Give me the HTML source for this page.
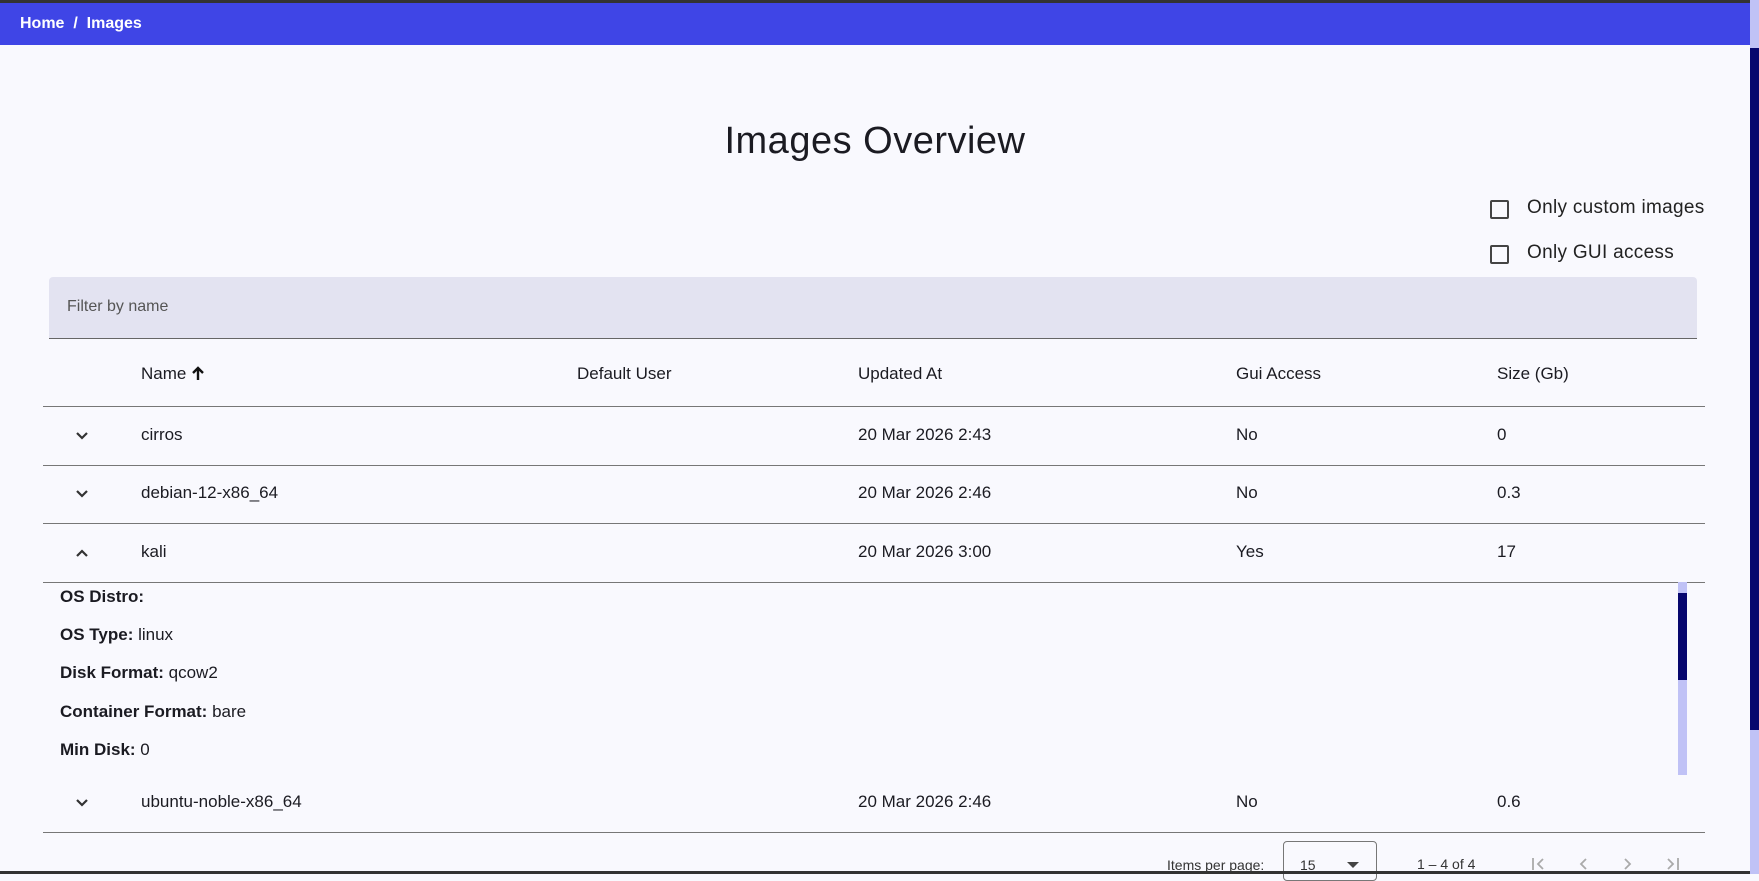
<!DOCTYPE html>
<html><head><meta charset="utf-8"><style>
*{box-sizing:border-box;margin:0;padding:0}
body{width:1759px;height:874px;overflow:hidden;background:#f9f9fe;font-family:"Liberation Sans",sans-serif;color:#1b1b22;position:relative}
.a{position:absolute;white-space:nowrap}
.hd{position:absolute;left:0;top:3px;width:1750px;height:42px;background:#3f45e6;color:#fff;font-weight:bold;font-size:16px;line-height:42px;padding-left:20px}
.line{position:absolute;left:43px;width:1662px;height:1px;background:#777}
.t{font-size:17px}
.cb{position:absolute;width:19px;height:19px;border:2px solid #444;border-radius:2px}
.chev{position:absolute;left:75px;width:14px;height:10px}
b{font-weight:bold}
</style></head><body>
<div class="a" style="left:0;top:0;width:1759px;height:3px;background:#333"></div>
<div class="hd">Home &nbsp;/ &nbsp;Images</div>
<div class="a" style="left:1750px;top:0;width:9px;height:48px;background:#c0c2f6"></div>
<div class="a" style="left:1750px;top:48px;width:9px;height:682px;background:#07076e"></div>
<div class="a" style="left:1750px;top:730px;width:9px;height:144px;background:#c0c2f6"></div>
<div class="a" style="left:0;top:141px;width:1750px;text-align:center;font-size:38px;line-height:0;color:#1b1b22;letter-spacing:0.5px">Images Overview</div>
<div class="cb" style="left:1490px;top:200px"></div>
<div class="a" style="left:1527px;top:197px;font-size:19px;color:#222;letter-spacing:0.3px">Only custom images</div>
<div class="cb" style="left:1490px;top:245px"></div>
<div class="a" style="left:1527px;top:242px;font-size:19px;color:#222;letter-spacing:0.3px">Only GUI access</div>
<div class="a" style="left:49px;top:277px;width:1648px;height:62px;background:#e3e3f1;border-bottom:1px solid #666;border-radius:4px 4px 0 0"></div>
<div class="a" style="left:67px;top:298px;color:#555;font-size:16px">Filter by name</div>
<div class="a t" style="left:141px;top:364px">Name <svg width="14" height="16" viewBox="0 0 14 16" style="vertical-align:-2px"><path d="M7 15V3M2 8l5-5 5 5" stroke="#111" stroke-width="2.4" fill="none"/></svg></div>
<div class="a t" style="left:577px;top:364px">Default User</div>
<div class="a t" style="left:858px;top:364px">Updated At</div>
<div class="a t" style="left:1236px;top:364px">Gui Access</div>
<div class="a t" style="left:1497px;top:364px">Size (Gb)</div>
<div class="line" style="top:406px"></div>
<svg class="chev" style="top:431px" viewBox="0 0 14 10"><path d="M2 2l5 5 5-5" stroke="#333" stroke-width="2.2" fill="none"/></svg>
<div class="a t" style="left:141px;top:425px">cirros</div>
<div class="a t" style="left:858px;top:425px">20 Mar 2026 2:43</div>
<div class="a t" style="left:1236px;top:425px">No</div>
<div class="a t" style="left:1497px;top:425px">0</div>
<div class="line" style="top:465px"></div>
<svg class="chev" style="top:489px" viewBox="0 0 14 10"><path d="M2 2l5 5 5-5" stroke="#333" stroke-width="2.2" fill="none"/></svg>
<div class="a t" style="left:141px;top:483px">debian-12-x86_64</div>
<div class="a t" style="left:858px;top:483px">20 Mar 2026 2:46</div>
<div class="a t" style="left:1236px;top:483px">No</div>
<div class="a t" style="left:1497px;top:483px">0.3</div>
<div class="line" style="top:523px"></div>
<svg class="chev" style="top:548px" viewBox="0 0 14 10"><path d="M2 8l5-5 5 5" stroke="#333" stroke-width="2.2" fill="none"/></svg>
<div class="a t" style="left:141px;top:542px">kali</div>
<div class="a t" style="left:858px;top:542px">20 Mar 2026 3:00</div>
<div class="a t" style="left:1236px;top:542px">Yes</div>
<div class="a t" style="left:1497px;top:542px">17</div>
<div class="line" style="top:582px"></div>
<div class="a t" style="left:60px;top:587px"><b>OS Distro:</b></div>
<div class="a t" style="left:60px;top:625px"><b>OS Type:</b> linux</div>
<div class="a t" style="left:60px;top:663px"><b>Disk Format:</b> qcow2</div>
<div class="a t" style="left:60px;top:702px"><b>Container Format:</b> bare</div>
<div class="a t" style="left:60px;top:740px"><b>Min Disk:</b> 0</div>
<div class="a" style="left:1678px;top:582px;width:9px;height:193px;background:#c0c2f6"></div>
<div class="a" style="left:1678px;top:593px;width:9px;height:87px;background:#07076e"></div>
<svg class="chev" style="top:798px" viewBox="0 0 14 10"><path d="M2 2l5 5 5-5" stroke="#333" stroke-width="2.2" fill="none"/></svg>
<div class="a t" style="left:141px;top:792px">ubuntu-noble-x86_64</div>
<div class="a t" style="left:858px;top:792px">20 Mar 2026 2:46</div>
<div class="a t" style="left:1236px;top:792px">No</div>
<div class="a t" style="left:1497px;top:792px">0.6</div>
<div class="line" style="top:832px"></div>
<div class="a" style="left:1167px;top:857px;font-size:14px;color:#333">Items per page:</div>
<div class="a" style="left:1283px;top:841px;width:94px;height:40px;border:1px solid #777;border-radius:4px"></div>
<div class="a" style="left:1300px;top:857px;font-size:14px;color:#333">15</div>
<div class="a" style="left:1347px;top:862px;width:0;height:0;border-left:6px solid transparent;border-right:6px solid transparent;border-top:6px solid #444"></div>
<div class="a" style="left:1417px;top:856px;font-size:14px;color:#333">1 – 4 of 4</div>
<svg class="a" style="left:1530px;top:856px" width="16" height="16" viewBox="0 0 16 16"><path d="M3 2v12M13 3l-5 5 5 5" stroke="#aaa" stroke-width="1.8" fill="none"/></svg>
<svg class="a" style="left:1577px;top:856px" width="12" height="16" viewBox="0 0 12 16"><path d="M9 3l-5 5 5 5" stroke="#aaa" stroke-width="1.8" fill="none"/></svg>
<svg class="a" style="left:1622px;top:856px" width="12" height="16" viewBox="0 0 12 16"><path d="M3 3l5 5-5 5" stroke="#aaa" stroke-width="1.8" fill="none"/></svg>
<svg class="a" style="left:1665px;top:856px" width="16" height="16" viewBox="0 0 16 16"><path d="M3 3l5 5-5 5M13 2v12" stroke="#aaa" stroke-width="1.8" fill="none"/></svg>
<div class="a" style="left:0;top:871px;width:1750px;height:3px;background:#333"></div>
</body></html>
